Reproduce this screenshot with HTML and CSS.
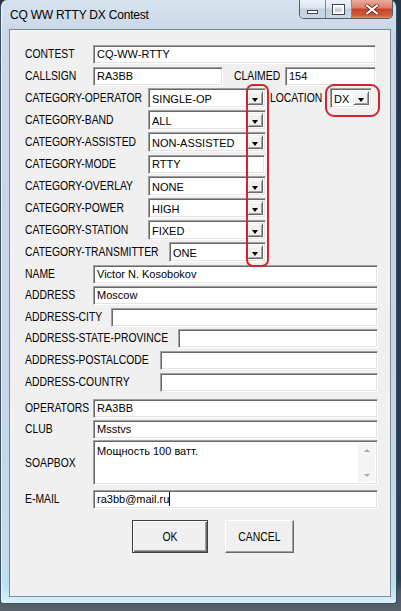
FILE: index.html
```html
<!DOCTYPE html>
<html lang="ru">
<head>
  <meta charset="UTF-8" />
  <meta name="viewport" content="width=device-width, initial-scale=1.0">
  <title>CQ WW RTTY DX Contest</title>
  <link rel="stylesheet" href="styles.css">
</head>
<body>
  <div class="desktop">
    <div class="window">
      <div class="titlebar">
        <span class="title">CQ WW RTTY DX Contest</span>
        <div class="caption">
          <div class="cap cap-min"><span class="glyph-min"></span></div>
          <div class="cap cap-max"><span class="glyph-max"></span></div>
          <div class="cap cap-close">
            <svg width="14" height="11" viewBox="0 0 14 11">
              <path d="M2 1.5 L12 9.5 M12 1.5 L2 9.5" stroke="#6b2a20" stroke-width="3.6" stroke-linecap="round"/>
              <path d="M2 1.5 L12 9.5 M12 1.5 L2 9.5" stroke="#fff" stroke-width="2.2" stroke-linecap="round"/>
            </svg>
          </div>
        </div>
      </div>

      <div class="client">
        <div class="form">
          <div class="row">
            <span class="lbl w-short">CONTEST</span>
            <div class="edit w-contest">CQ-WW-RTTY</div>
          </div>
          <div class="row">
            <span class="lbl w-short">CALLSIGN</span>
            <div class="edit w-call">RA3BB</div>
            <span class="lbl w-claimed">CLAIMED</span>
            <div class="edit w-claim">154</div>
          </div>
          <div class="row">
            <span class="lbl w-cat">CATEGORY-OPERATOR</span>
            <div class="combo w-sel"><span class="combo-text">SINGLE-OP</span><span class="combo-btn"></span></div>
            <span class="lbl w-loc">LOCATION</span>
            <div class="combo w-locsel"><span class="combo-text">DX</span><span class="combo-btn"></span></div>
          </div>
          <div class="row">
            <span class="lbl w-cat">CATEGORY-BAND</span>
            <div class="combo w-sel"><span class="combo-text">ALL</span><span class="combo-btn"></span></div>
          </div>
          <div class="row">
            <span class="lbl w-cat">CATEGORY-ASSISTED</span>
            <div class="combo w-sel"><span class="combo-text">NON-ASSISTED</span><span class="combo-btn"></span></div>
          </div>
          <div class="row">
            <span class="lbl w-cat">CATEGORY-MODE</span>
            <div class="edit w-mode">RTTY</div>
          </div>
          <div class="row">
            <span class="lbl w-cat">CATEGORY-OVERLAY</span>
            <div class="combo w-sel"><span class="combo-text">NONE</span><span class="combo-btn"></span></div>
          </div>
          <div class="row">
            <span class="lbl w-cat">CATEGORY-POWER</span>
            <div class="combo w-sel"><span class="combo-text">HIGH</span><span class="combo-btn"></span></div>
          </div>
          <div class="row">
            <span class="lbl w-cat">CATEGORY-STATION</span>
            <div class="combo w-sel"><span class="combo-text">FIXED</span><span class="combo-btn"></span></div>
          </div>
          <div class="row">
            <span class="lbl w-tx">CATEGORY-TRANSMITTER</span>
            <div class="combo w-txsel"><span class="combo-text">ONE</span><span class="combo-btn"></span></div>
          </div>
          <div class="row">
            <span class="lbl w-short">NAME</span>
            <div class="edit grow">Victor N. Kosobokov</div>
          </div>
          <div class="row row-up">
            <span class="lbl w-short">ADDRESS</span>
            <div class="edit grow">Moscow</div>
          </div>
          <div class="row">
            <span class="lbl w-city">ADDRESS-CITY</span>
            <div class="edit grow"></div>
          </div>
          <div class="row row-up">
            <span class="lbl w-state">ADDRESS-STATE-PROVINCE</span>
            <div class="edit grow"></div>
          </div>
          <div class="row">
            <span class="lbl w-postal">ADDRESS-POSTALCODE</span>
            <div class="edit grow"></div>
          </div>
          <div class="row">
            <span class="lbl w-postal">ADDRESS-COUNTRY</span>
            <div class="edit grow"></div>
          </div>
          <div class="row row-gap">
            <span class="lbl w-short">OPERATORS</span>
            <div class="edit grow">RA3BB</div>
          </div>
          <div class="row row-up">
            <span class="lbl w-short">CLUB</span>
            <div class="edit grow">Msstvs</div>
          </div>
          <div class="row row-tall row-up">
            <span class="lbl w-short">SOAPBOX</span>
            <div class="memo grow">
              <span class="memo-text">Мощность 100 ватт.</span>
              <span class="memo-bar">
                <span class="memo-up"></span>
                <span class="memo-down"></span>
              </span>
            </div>
          </div>
          <div class="row row-down">
            <span class="lbl w-short">E-MAIL</span>
            <div class="edit grow">ra3bb@mail.ru<span class="caret"></span></div>
          </div>
        </div>

        <div class="actions">
          <div class="btn btn-default"><span class="btn-text">OK</span></div>
          <div class="btn btn-cancel"><span class="btn-text">CANCEL</span></div>
        </div>

        <div class="mark mark-arrows"></div>
        <div class="mark mark-location"></div>
      </div>
    </div>
  </div>
</body>
</html>
```

FILE: styles.css
```css
body { margin: 0; background: #2f3b47; font-family: "Liberation Sans", Arial, sans-serif; }
.desktop { width: 401px; height: 611px; overflow: hidden; background: linear-gradient(to bottom, #24364a 0%, #2c4055 95%, #505a63 97%, #59636b 100%); }

/* vista frame */
.window { width: 397px; height: 604px; box-sizing: border-box; padding: 0 5px 7px 8px; border-radius: 7px 7px 3px 3px; border: 1px solid #3b4d60; border-top: none;
  background: linear-gradient(to bottom, #d6e2ee 0%, #cad9e8 5%, #c4d5e6 60%, #c6dbea 93%, #b7e3f2 97%, #d8f1fa 100%); box-shadow: inset 1px 0 0 #eef4fa; }
.titlebar { height: 29px; display: flex; align-items: flex-start; justify-content: space-between; }
.title { font-size: 12px; color: #000; margin: 8px 0 0 1px; letter-spacing: -0.2px; }

.caption { display: flex; margin-right: -2px; border: 1px solid #4e5f72; border-top: none; border-radius: 0 0 5px 5px; overflow: hidden; height: 18px; }
.cap { display: flex; align-items: center; justify-content: center; height: 18px; }
.cap-min, .cap-max { width: 25px; background: linear-gradient(to bottom, #eef3f8 0%, #dbe4ee 45%, #c3d0de 50%, #cbd9e7 100%); border-right: 1px solid #7d8d9f; }
.cap-close { width: 40px; background: linear-gradient(to bottom, #ecab9c 0%, #dc7c66 45%, #c84328 50%, #d25b3c 85%, #e08a6a 100%); }
.glyph-min { width: 9px; height: 2px; background: #fff; border: 1px solid #3b4653; margin-top: 6px; }
.glyph-max { width: 7px; height: 5px; border: 2px solid #fff; outline: 1px solid #3b4653; }

.client { position: relative; height: 568px; box-sizing: border-box; background: #f0f0f0; border: 1px solid #7a8a99; }

/* form */
.form { display: flex; flex-direction: column; gap: 2px; width: 353px; padding: 14px 0 0 15px; }
.row { display: flex; align-items: center; height: 20px; }
.row-up { margin-top: -1px; }
.row-down { margin-top: 2px; }
.row-gap { margin-top: 4px; }
.row-tall { height: 45px; }
.lbl { font-size: 12.5px; color: #000; white-space: nowrap; flex: none; transform: scaleX(0.83); transform-origin: left center; }
.w-short { width: 68px; }
.w-cat { width: 123px; }
.w-tx { width: 144px; }
.w-city { width: 86px; }
.w-state { width: 153px; }
.w-postal { width: 135px; }
.w-claimed { width: 51px; margin-left: 11px; }
.w-loc { width: 60px; margin-left: 4px; }

.edit, .combo, .memo { box-sizing: border-box; background: #fff; border: 1px solid; border-color: #a0a0a0 #fff #fff #a0a0a0; box-shadow: inset 1px 1px 0 #696969, inset -1px -1px 0 #e3e3e3; font-size: 11px; color: #000; flex: none; }
.edit { height: 19px; line-height: 17px; padding-left: 3px; white-space: nowrap; }
.grow { flex: 1; }
.w-contest { width: 283px; }
.w-call { width: 130px; }
.w-claim { width: 91px; }
.w-mode { width: 117px; }
.w-sel { width: 118px; }
.w-txsel { width: 97px; }
.w-locsel { width: 42px; }

.combo { height: 20px; display: flex; align-items: stretch; padding: 2px; }
.combo-text { flex: 1; line-height: 16px; padding-left: 1px; white-space: nowrap; overflow: hidden; }
.combo-btn { width: 16px; box-sizing: border-box; background: #f0f0f0; border: 1px solid; border-color: #f0f0f0 #696969 #696969 #f0f0f0; box-shadow: inset 1px 1px 0 #fff, inset -1px -1px 0 #a0a0a0; position: relative; }
.combo-btn::after { content: ""; position: absolute; left: 4px; top: 6px; border-left: 3.5px solid transparent; border-right: 3.5px solid transparent; border-top: 4px solid #000; }

.memo { height: 45px; display: flex; padding: 2px; }
.memo-text { flex: 1; padding: 1px 0 0 1px; line-height: 14px; }
.memo-bar { width: 17px; background: #f4f4f4; display: flex; flex-direction: column; justify-content: space-between; align-items: center; padding: 6px 0 5px; }
.memo-up { border-left: 3.5px solid transparent; border-right: 3.5px solid transparent; border-bottom: 3px solid #a8a8a8; }
.memo-down { border-left: 3.5px solid transparent; border-right: 3.5px solid transparent; border-top: 3px solid #a8a8a8; }
.caret { display: inline-block; width: 1px; height: 14px; background: #000; vertical-align: -3px; }

/* buttons */
.actions { display: flex; gap: 17px; padding: 11px 0 0 122px; }
.btn { box-sizing: border-box; height: 33px; display: flex; align-items: center; justify-content: center; font-size: 12.5px; background: #f0f0f0; }
.btn-text { display: inline-block; transform: scaleX(0.83); }
.btn-default { width: 76px; border: 1px solid #404040; box-shadow: inset 1px 1px 0 #fff, inset -1px -1px 0 #696969, inset -2px -2px 0 #a0a0a0; }
.btn-cancel { width: 69px; border: 1px solid; border-color: #fff #696969 #696969 #fff; box-shadow: inset -1px -1px 0 #a0a0a0; }

/* red annotation marks */
.mark { position: absolute; border: 2px solid #d3232f; border-radius: 7px; box-sizing: border-box; }
.mark-arrows { left: 236px; top: 54px; width: 23px; height: 183px; }
.mark-location { left: 315px; top: 54px; width: 55px; height: 33px; border-radius: 9px; }
```
